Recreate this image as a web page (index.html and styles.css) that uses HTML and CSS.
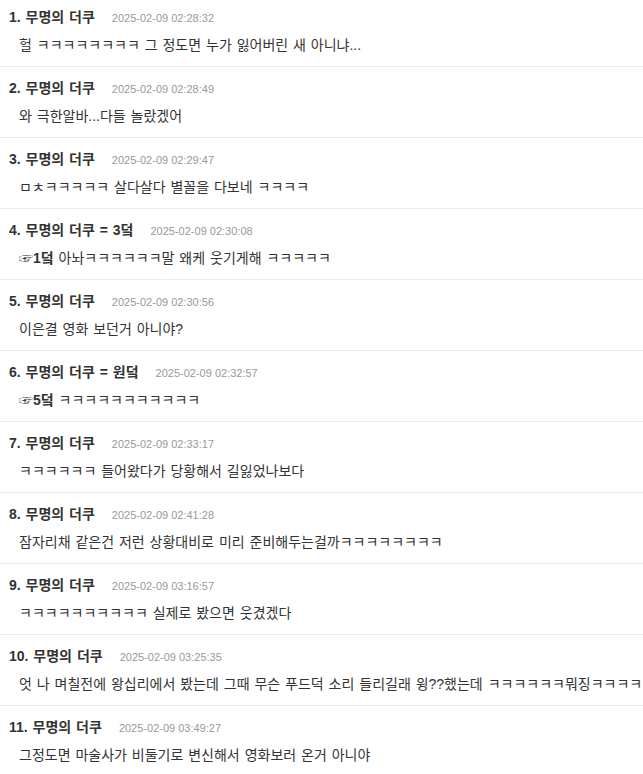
FILE: index.html
```html
<!DOCTYPE html>
<html lang="ko">
<head>
  <meta charset="UTF-8" />
  <meta name="viewport" content="width=device-width, initial-scale=1.0"/>
  <title>댓글</title>
  <link rel="stylesheet" href="styles.css">
</head>
<body>
  <ul class="comments">
    <li class="comment">
      <div class="comment-head"><span class="name">1. 무명의 더쿠</span><span class="date">2025-02-09 02:28:32</span></div>
      <p class="comment-body">헐 ㅋㅋㅋㅋㅋㅋㅋㅋ 그 정도면 누가 잃어버린 새 아니냐...</p>
    </li>
    <li class="comment">
      <div class="comment-head"><span class="name">2. 무명의 더쿠</span><span class="date">2025-02-09 02:28:49</span></div>
      <p class="comment-body">와 극한알바...다들 놀랐겠어</p>
    </li>
    <li class="comment">
      <div class="comment-head"><span class="name">3. 무명의 더쿠</span><span class="date">2025-02-09 02:29:47</span></div>
      <p class="comment-body">ㅁㅊㅋㅋㅋㅋㅋ 살다살다 별꼴을 다보네 ㅋㅋㅋㅋ</p>
    </li>
    <li class="comment">
      <div class="comment-head"><span class="name">4. 무명의 더쿠 = 3덬</span><span class="date">2025-02-09 02:30:08</span></div>
      <p class="comment-body"><b class="reply">☞1덬</b> 아놔ㅋㅋㅋㅋㅋㅋ말 왜케 웃기게해 ㅋㅋㅋㅋㅋ</p>
    </li>
    <li class="comment">
      <div class="comment-head"><span class="name">5. 무명의 더쿠</span><span class="date">2025-02-09 02:30:56</span></div>
      <p class="comment-body">이은결 영화 보던거 아니야?</p>
    </li>
    <li class="comment">
      <div class="comment-head"><span class="name">6. 무명의 더쿠 = 원덬</span><span class="date">2025-02-09 02:32:57</span></div>
      <p class="comment-body"><b class="reply">☞5덬</b> ㅋㅋㅋㅋㅋㅋㅋㅋㅋㅋㅋ</p>
    </li>
    <li class="comment">
      <div class="comment-head"><span class="name">7. 무명의 더쿠</span><span class="date">2025-02-09 02:33:17</span></div>
      <p class="comment-body">ㅋㅋㅋㅋㅋㅋ 들어왔다가 당황해서 길잃었나보다</p>
    </li>
    <li class="comment">
      <div class="comment-head"><span class="name">8. 무명의 더쿠</span><span class="date">2025-02-09 02:41:28</span></div>
      <p class="comment-body">잠자리채 같은건 저런 상황대비로 미리 준비해두는걸까ㅋㅋㅋㅋㅋㅋㅋㅋ</p>
    </li>
    <li class="comment">
      <div class="comment-head"><span class="name">9. 무명의 더쿠</span><span class="date">2025-02-09 03:16:57</span></div>
      <p class="comment-body">ㅋㅋㅋㅋㅋㅋㅋㅋㅋㅋ 실제로 봤으면 웃겼겠다</p>
    </li>
    <li class="comment">
      <div class="comment-head"><span class="name">10. 무명의 더쿠</span><span class="date">2025-02-09 03:25:35</span></div>
      <p class="comment-body">엇 나 며칠전에 왕십리에서 봤는데 그때 무슨 푸드덕 소리 들리길래 윙??했는데 ㅋㅋㅋㅋㅋㅋ뭐징ㅋㅋㅋㅋ</p>
    </li>
    <li class="comment">
      <div class="comment-head"><span class="name">11. 무명의 더쿠</span><span class="date">2025-02-09 03:49:27</span></div>
      <p class="comment-body">그정도면 마술사가 비둘기로 변신해서 영화보러 온거 아니야</p>
    </li>
  </ul>
</body>
</html>
```

FILE: styles.css
```css
body {
  margin: 0;
  background: #fff;
  color: #333;
  font-family: "Liberation Sans", "Noto Sans CJK KR", sans-serif;
  overflow: hidden;
}
.comments {
  list-style: none;
  margin: 0;
  padding: 0;
}
.comment {
  padding: 12px 0 12px 9px;
  border-bottom: 1px solid #ececec;
}
.comment:first-child {
  padding-top: 8px;
}
.comment-head {
  display: flex;
  align-items: baseline;
  height: 18px;
  line-height: 18px;
}
.name {
  font-size: 14px;
  font-weight: bold;
  color: #333;
  word-spacing: 1px;
}
.date {
  margin-left: 17px;
  font-size: 11px;
  color: #999;
}
.comment-body {
  margin: 10px 0 0 10px;
  font-size: 14px;
  line-height: 18px;
  word-spacing: 1px;
  white-space: nowrap;
}
.reply {
  font-weight: bold;
}
```
